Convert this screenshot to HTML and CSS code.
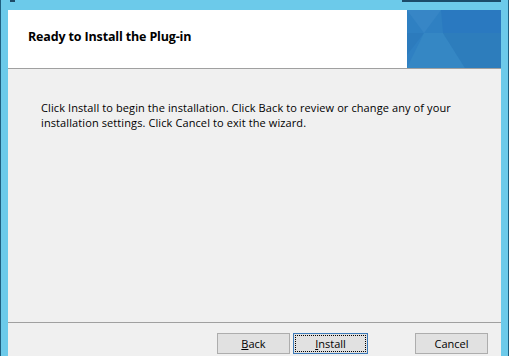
FILE: index.html
```html
<!DOCTYPE html>
<html lang="en">

<head>
    <meta charset="UTF-8">
    <meta name="viewport" content="width=device-width, initial-scale=1.0">
    <title>Ready to Install the Plug-in</title>
    <link rel="stylesheet" href="styles.css">
</head>

<body>
    <div class="titlebar">
        <span class="app-icon"></span>
        <span class="spacer"></span>
        <span class="controls"></span>
    </div>

    <div class="dialog">
        <div class="header">
            <h1 class="header-title">Ready to Install the Plug-in</h1>
            <div class="banner">
                <svg width="94" height="58" viewBox="0 0 94 58">
                    <rect width="94" height="58" fill="#2f80c2"/>
                    <polygon points="0,0 34,0 17,23" fill="#3786c6"/>
                    <polygon points="34,0 94,0 94,23 36,23" fill="#2a79c0"/>
                    <polygon points="0,23 17,23 0,45" fill="#2c7bbd"/>
                    <polygon points="17,23 36,23 58,58 0,58" fill="#3587c4"/>
                    <polygon points="36,23 94,23 94,58 58,58" fill="#2d7dbc"/>
                </svg>
            </div>
        </div>

        <div class="content">
            <p class="message">Click Install to begin the installation. Click Back to review or change any of your installation settings. Click Cancel to exit the wizard.</p>
        </div>

        <div class="footer">
            <button type="button" class="btn"><u>B</u>ack</button>
            <button type="button" class="btn btn-default"><span class="focus"><u>I</u>nstall</span></button>
            <button type="button" class="btn btn-cancel">Cancel</button>
        </div>
    </div>
</body>

</html>
```

FILE: styles.css
```css
html,
body {
    height: 100%;
}

body {
    margin: 0;
    display: flex;
    flex-direction: column;
    background-color: #6ccaea;
    border-left: 1px solid #1f5f80;
    border-right: 1px solid #1f5f80;
    font-family: "Open Sans", "Noto Sans", Arial, sans-serif;
    font-size: 12px;
    color: #000;
    overflow: hidden;
}

.titlebar {
    display: flex;
    height: 10px;
    flex-shrink: 0;
}

.app-icon {
    width: 5px;
    height: 2px;
    margin-left: 9px;
    background-color: #1e4a66;
}

.spacer {
    flex: 1;
}

.controls {
    width: 99px;
    height: 2px;
    margin-right: 7px;
    background-color: #1b4c6a;
}

.dialog {
    flex: 1;
    display: flex;
    flex-direction: column;
    margin: 0 7px 0 7px;
    background-color: #f0f0f0;
}

.header {
    display: flex;
    height: 58px;
    background-color: #fff;
    border-bottom: 1px solid #a0a0a0;
}

.header-title {
    flex: 1;
    margin: 0;
    padding: 0 0 4px 20px;
    font-size: 12.5px;
    font-weight: bold;
    line-height: 54px;
    letter-spacing: -0.15px;
}

.banner {
    width: 94px;
    height: 58px;
}

.banner svg {
    display: block;
}

.content {
    flex: 1;
    padding: 31px 40px 0 33px;
}

.message {
    margin: 0;
    font-size: 11px;
    line-height: 15px;
    letter-spacing: 0.1px;
}

.footer {
    display: flex;
    align-items: flex-start;
    height: 23px;
    padding: 10px 0 0 209px;
    border-top: 1px solid #a0a0a0;
}

.btn {
    width: 73px;
    height: 21px;
    padding: 0;
    border: 1px solid #adadad;
    background-color: #e1e1e1;
    font-family: inherit;
    font-size: 11px;
    color: #000;
}

.btn-default {
    width: 75px;
    margin-left: 3px;
    border-color: #3d7ab8;
}

.focus {
    display: block;
    margin: 1px;
    line-height: 15px;
    border: 1px dotted #000;
}

.btn-cancel {
    margin-left: 47px;
}
```
